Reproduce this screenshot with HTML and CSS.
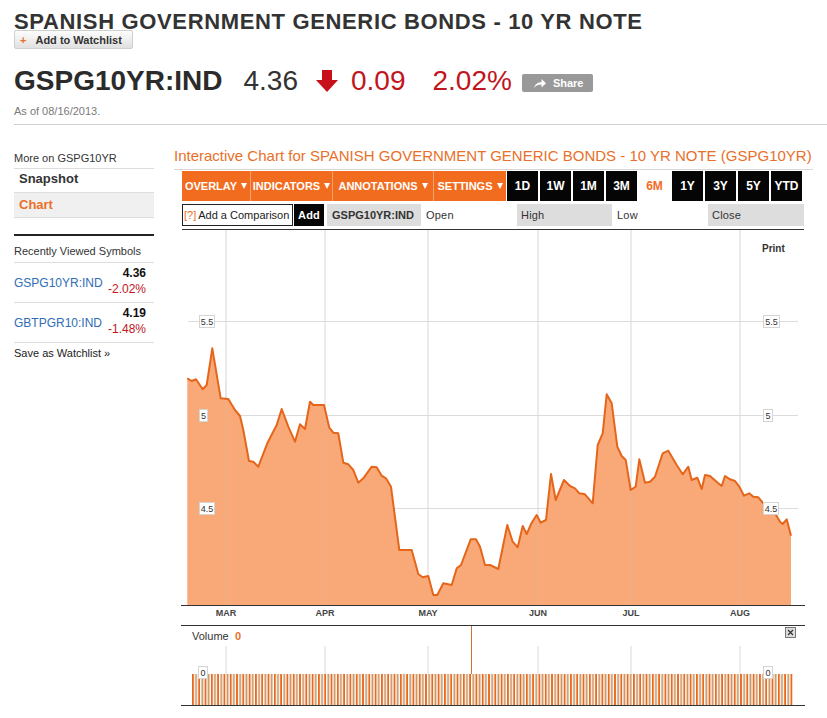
FILE: index.html
```html
<!DOCTYPE html>
<html>
<head>
<meta charset="utf-8">
<link rel="stylesheet" href="styles.css">
</head>
<body>
<div class="page">
  <header class="head">
    <h1 class="title">SPANISH GOVERNMENT GENERIC BONDS - 10 YR NOTE</h1>
    <div class="watch"><span class="plus">+</span><span>Add to Watchlist</span></div>
    <div class="quote">
      <span class="sym">GSPG10YR:IND</span>
      <span class="price">4.36</span>
      <svg class="arrow" width="22" height="22" viewBox="0 0 22 22"><path d="M6 0H16V10H22L11 22L0 10H6Z" fill="#c8101a"/></svg>
      <span class="chg">0.09</span>
      <span class="pct">2.02%</span>
      <div class="share"><svg width="12" height="9" viewBox="0 0 12 9"><path d="M0 9C1 5 4 3.2 7.5 3.2V0L12 4.3L7.5 8.6V5.6C4.5 5.6 2 6.5 0 9Z" fill="#fff"/></svg><span>Share</span></div>
    </div>
    <div class="asof">As of 08/16/2013.</div>
  </header>

  <div class="content">
    <aside class="side">
      <div class="side-h">More on GSPG10YR</div>
      <div class="side-link">Snapshot</div>
      <div class="side-link active">Chart</div>
      <div class="side-sep"></div>
      <div class="side-h2">Recently Viewed Symbols</div>
      <div class="rv">
        <span class="rv-sym">GSPG10YR:IND</span>
        <div class="rv-vals"><div class="rv-v">4.36</div><div class="rv-p">-2.02%</div></div>
      </div>
      <div class="rv">
        <span class="rv-sym">GBTPGR10:IND</span>
        <div class="rv-vals"><div class="rv-v">4.19</div><div class="rv-p">-1.48%</div></div>
      </div>
      <div class="save">Save as Watchlist »</div>
    </aside>

    <main class="main">
      <div class="ctitle">Interactive Chart for SPANISH GOVERNMENT GENERIC BONDS - 10 YR NOTE (GSPG10YR)</div>
      <div class="toolbar">
        <div class="menus">
          <div class="menu m1">OVERLAY<span class="tri"></span></div>
          <div class="menu m2">INDICATORS<span class="tri"></span></div>
          <div class="menu m3">ANNOTATIONS<span class="tri"></span></div>
          <div class="menu m4">SETTINGS<span class="tri"></span></div>
        </div>
        <div class="rng first">1D</div>
        <div class="rng">1W</div>
        <div class="rng">1M</div>
        <div class="rng">3M</div>
        <div class="rng sel">6M</div>
        <div class="rng">1Y</div>
        <div class="rng">3Y</div>
        <div class="rng">5Y</div>
        <div class="rng">YTD</div>
      </div>
      <div class="cmp-row">
        <div class="cmp"><span class="q">[?]</span>Add a Comparison</div>
        <div class="add">Add</div>
        <div class="symbox">GSPG10YR:IND</div>
        <div class="lbl w96">Open</div>
        <div class="box w95">High</div>
        <div class="lbl w96">Low</div>
        <div class="box w96">Close</div>
      </div>
      <svg class="chart" width="627" height="488" viewBox="181 230 627 488">
        <defs>
          <pattern id="vb" patternUnits="userSpaceOnUse" x="192" y="674" width="6.3" height="31">
            <rect x="0" y="0" width="1.8" height="31" fill="#e9691f"/>
            <rect x="3.15" y="0" width="1.8" height="31" fill="#c99563"/>
          </pattern>
        </defs>
        <g stroke="#e4e4e4" stroke-width="1.5">
          <line x1="226" y1="230" x2="226" y2="605"/>
          <line x1="325" y1="230" x2="325" y2="605"/>
          <line x1="428" y1="230" x2="428" y2="605"/>
          <line x1="538" y1="230" x2="538" y2="605"/>
          <line x1="631" y1="230" x2="631" y2="605"/>
          <line x1="740" y1="230" x2="740" y2="605"/>
        </g>
        <g stroke="#dcdcdc" stroke-width="1">
          <line x1="188" y1="321.5" x2="798" y2="321.5"/>
          <line x1="188" y1="415.5" x2="798" y2="415.5"/>
          <line x1="188" y1="508.5" x2="798" y2="508.5"/>
        </g>
        <path fill="#f9a978" d="M187.3,605 L187.3,378.3 L191.7,381 L196,379.3 L202.7,389.3 L206.7,385 L212.3,348.3 L220.7,398.3 L228.3,399 L235,410 L240,416 L243.3,430 L249,461 L253.3,461.7 L258.3,466.7 L267.3,443.3 L276.7,425 L281.7,409 L288.3,426.7 L295,441.7 L300,424.3 L305,429 L310,401.7 L313.3,405 L324,405 L329.3,427.7 L333.3,432.7 L338.3,433.3 L343.3,462.7 L348.3,464.3 L353.3,470 L358.3,482.7 L363.3,478.3 L371.7,466.7 L376.7,467.3 L381.7,475.7 L386,478.3 L391,486.7 L399.3,550 L411.7,550 L418.3,574 L422.7,577.3 L428.3,576 L433.3,595 L437.3,595 L443.3,583.3 L451.7,585 L456.7,568.3 L461,565 L470.7,539.3 L476,539.3 L480,546.7 L485,565 L490,565 L498.3,569 L507.3,525 L512.7,541.7 L517.7,547.3 L522.7,526 L526.7,534 L531.7,522.7 L536.7,515 L540.7,522.7 L546,520 L551,474 L555.7,500 L564,480 L570,486 L575,488.3 L579.3,493.3 L585,494.3 L592.7,503.3 L597.7,445 L602.7,433.3 L606.7,394.3 L611.7,403.3 L617.3,446.7 L621.7,456 L625.7,460 L630.7,490 L635.7,486.7 L639.3,459.3 L645,482.7 L650,481.7 L655,476.7 L662.7,453.3 L668.3,450.7 L676.7,465 L682.7,474.3 L688.3,466.7 L691.7,480 L697.3,477.7 L701.7,489 L705,475 L710,476 L718.3,483.3 L721.7,486 L725,476 L730,479.3 L735,481 L739.3,486.7 L744,495.7 L749.3,493.3 L753.3,496.7 L758.3,497.3 L763.3,503.3 L769.3,505 L775,513.3 L780,521.7 L782.7,524 L786.7,519.3 L791,535.7 L791,605 Z"/>
        <g stroke="rgba(200,200,200,0.25)" stroke-width="1">
          <line x1="226" y1="380" x2="226" y2="605"/>
          <line x1="325" y1="405" x2="325" y2="605"/>
          <line x1="538" y1="515" x2="538" y2="605"/>
          <line x1="631" y1="490" x2="631" y2="605"/>
          <line x1="740" y1="487" x2="740" y2="605"/>
        </g>
        <polyline fill="none" stroke="#e5661b" stroke-width="2" stroke-linejoin="round" points="187.3,378.3 191.7,381 196,379.3 202.7,389.3 206.7,385 212.3,348.3 220.7,398.3 228.3,399 235,410 240,416 243.3,430 249,461 253.3,461.7 258.3,466.7 267.3,443.3 276.7,425 281.7,409 288.3,426.7 295,441.7 300,424.3 305,429 310,401.7 313.3,405 324,405 329.3,427.7 333.3,432.7 338.3,433.3 343.3,462.7 348.3,464.3 353.3,470 358.3,482.7 363.3,478.3 371.7,466.7 376.7,467.3 381.7,475.7 386,478.3 391,486.7 399.3,550 411.7,550 418.3,574 422.7,577.3 428.3,576 433.3,595 437.3,595 443.3,583.3 451.7,585 456.7,568.3 461,565 470.7,539.3 476,539.3 480,546.7 485,565 490,565 498.3,569 507.3,525 512.7,541.7 517.7,547.3 522.7,526 526.7,534 531.7,522.7 536.7,515 540.7,522.7 546,520 551,474 555.7,500 564,480 570,486 575,488.3 579.3,493.3 585,494.3 592.7,503.3 597.7,445 602.7,433.3 606.7,394.3 611.7,403.3 617.3,446.7 621.7,456 625.7,460 630.7,490 635.7,486.7 639.3,459.3 645,482.7 650,481.7 655,476.7 662.7,453.3 668.3,450.7 676.7,465 682.7,474.3 688.3,466.7 691.7,480 697.3,477.7 701.7,489 705,475 710,476 718.3,483.3 721.7,486 725,476 730,479.3 735,481 739.3,486.7 744,495.7 749.3,493.3 753.3,496.7 758.3,497.3 763.3,503.3 769.3,505 775,513.3 780,521.7 782.7,524 786.7,519.3 791,535.7"/>
        <g class="ylab">
          <rect x="199.5" y="315.5" width="15" height="12"/><text x="207" y="325">5.5</text>
          <rect x="199.5" y="409.5" width="8" height="12"/><text x="203.5" y="419">5</text>
          <rect x="199.5" y="502.5" width="15" height="12"/><text x="207" y="512">4.5</text>
          <rect x="763.5" y="315.5" width="16" height="12"/><text x="771.5" y="325">5.5</text>
          <rect x="763.5" y="409.5" width="9" height="12"/><text x="768" y="419">5</text>
          <rect x="763.5" y="502.5" width="15" height="12"/><text x="771" y="512">4.5</text>
        </g>
        <text class="print" x="762" y="252">Print</text>
        <g stroke="#333" stroke-width="1">
          <line x1="181" y1="605.5" x2="805" y2="605.5"/>
          <line x1="181" y1="625.5" x2="805" y2="625.5"/>
          <line x1="181" y1="705.5" x2="805" y2="705.5"/>
        </g>
        <g class="mon">
          <text x="226" y="616">MAR</text>
          <text x="325" y="616">APR</text>
          <text x="428" y="616">MAY</text>
          <text x="538" y="616">JUN</text>
          <text x="631" y="616">JUL</text>
          <text x="740" y="616">AUG</text>
        </g>
        <text class="vol" x="192" y="640">Volume</text>
        <text class="vol0" x="235" y="640">0</text>
        <g>
          <rect x="785.5" y="627.5" width="10" height="10" fill="#ddd" stroke="#777"/>
          <path d="M788 630L793 635M793 630L788 635" stroke="#333" stroke-width="1.2"/>
        </g>
        <g stroke="#e6e6e6" stroke-width="1.5">
          <line x1="226" y1="646" x2="226" y2="674"/>
          <line x1="325" y1="646" x2="325" y2="674"/>
          <line x1="428" y1="646" x2="428" y2="674"/>
          <line x1="538" y1="646" x2="538" y2="674"/>
          <line x1="631" y1="646" x2="631" y2="674"/>
          <line x1="740" y1="646" x2="740" y2="674"/>
        </g>
        <line x1="471.5" y1="626" x2="471.5" y2="674" stroke="#c8733a" stroke-width="1"/>
        <rect x="192" y="674" width="601" height="31" fill="url(#vb)"/>
        <g class="ylab">
          <rect x="198.5" y="666.5" width="9" height="12"/><text x="203" y="676">0</text>
          <rect x="763.5" y="666.5" width="9" height="12"/><text x="768" y="676">0</text>
        </g>
      </svg>
    </main>
  </div>
</div>
</body>
</html>
```
FILE: styles.css
```css
html, body {
  margin: 0;
  padding: 0;
  background: #fff;
}
body {
  font-family: "Liberation Sans", Arial, sans-serif;
  color: #333;
  width: 827px;
  height: 718px;
  overflow: hidden;
}
.page {
  padding-left: 14px;
}
.head {
  border-bottom: 1px solid #cfcfcf;
  padding-bottom: 6px;
}
.title {
  margin: 0;
  padding-top: 13px;
  font-size: 22px;
  line-height: 17px;
  font-weight: bold;
  letter-spacing: 0.65px;
  color: #333;
}
.watch {
  margin-top: 0;
  width: 119px;
  height: 19px;
  box-sizing: border-box;
  display: flex;
  align-items: center;
  padding-left: 5px;
  border: 1px solid #cfcfcf;
  border-radius: 2px;
  background: linear-gradient(#fdfdfd, #e0e0e0);
  font-size: 11px;
  font-weight: bold;
  color: #333;
}
.plus {
  color: #e8702a;
  margin-right: 9px;
}
.quote {
  margin-top: 15px;
  display: flex;
  align-items: center;
  font-size: 28px;
  line-height: 34px;
}
.sym {
  font-weight: bold;
  color: #2b2b2b;
}
.price {
  margin-left: 21px;
  color: #333;
}
.arrow {
  margin-left: 18px;
}
.chg {
  margin-left: 13px;
  color: #c0161e;
}
.pct {
  margin-left: 27px;
  color: #c0161e;
}
.share {
  margin-left: 10px;
  margin-top: 4px;
  width: 71px;
  height: 18px;
  box-sizing: border-box;
  padding-left: 12px;
  display: flex;
  align-items: center;
  gap: 7px;
  background: #999;
  border-radius: 2px;
  color: #fff;
  font-size: 11px;
  font-weight: bold;
  line-height: 18px;
}
.asof {
  margin-top: 6px;
  font-size: 11px;
  line-height: 14px;
  color: #7a7a7a;
}

.content {
  display: flex;
  align-items: flex-start;
}
.side {
  width: 140px;
  margin-right: 16px;
  padding-top: 26px;
  font-size: 11px;
}
.side-h {
  line-height: 14px;
  padding-bottom: 3px;
  border-bottom: 1px solid #ddd;
}
.side-link {
  font-size: 13px;
  font-weight: bold;
  line-height: 18px;
  padding: 1px 5px 4px;
  border-bottom: 1px solid #ddd;
  color: #333;
}
.side-link.active {
  padding: 3px 5px;
  background: #f0f0f0;
  color: #e8702a;
}
.side-sep {
  margin-top: 16px;
  height: 2px;
  background: #222;
}
.side-h2 {
  line-height: 14px;
  padding: 8px 0 4px;
  border-bottom: 1px solid #ddd;
}
.rv {
  display: flex;
  justify-content: space-between;
  align-items: center;
  padding: 2px 8px 5px 0;
  border-bottom: 1px solid #ddd;
}
.rv-sym {
  font-size: 12px;
  line-height: 16px;
  padding-top: 3px;
  color: #2f6db5;
}
.rv-vals {
  text-align: right;
  font-size: 12px;
  line-height: 16px;
}
.rv-v {
  font-weight: bold;
  color: #111;
}
.rv-p {
  color: #c0161e;
}
.save {
  padding-top: 3px;
  line-height: 14px;
  color: #222;
}

.main {
  flex: 1;
  padding-top: 21px;
}
.ctitle {
  margin: 0 14px 0 4px;
  padding-bottom: 3px;
  border-bottom: 1px solid #d6d6d6;
  font-size: 15px;
  line-height: 20px;
  color: #e8702a;
}
.toolbar {
  margin: 1px 0 0 12px;
  width: 622px;
  height: 30px;
  display: flex;
}
.menus {
  display: flex;
  background: #f26c1f;
}
.menu {
  display: flex;
  align-items: center;
  justify-content: center;
  box-sizing: border-box;
  color: #fff;
  font-size: 11px;
  font-weight: bold;
  border-right: 1px solid #f7a26a;
}
.menu.m4 {
  border-right: none;
}
.m1 { width: 69px; }
.m2 { width: 82px; }
.m3 { width: 101px; }
.m4 { width: 72px; }
.tri {
  margin-left: 4px;
  width: 0;
  height: 0;
  border-left: 3.5px solid transparent;
  border-right: 3.5px solid transparent;
  border-top: 6px solid #fff;
}
.rng {
  width: 31px;
  margin-left: 2px;
  background: #050505;
  color: #fff;
  font-size: 12px;
  font-weight: bold;
  display: flex;
  align-items: center;
  justify-content: center;
}
.rng.first {
  margin-left: 1px;
}
.rng.sel {
  background: none;
  color: #f26c1f;
}
.cmp-row {
  margin: 3px 0 0 12px;
  width: 622px;
  height: 22px;
  padding-bottom: 3px;
  border-bottom: 1px solid #333;
  display: flex;
  font-size: 11px;
  letter-spacing: 0.2px;
}
.cmp-row > div {
  display: flex;
  align-items: center;
  box-sizing: border-box;
}
.cmp {
  width: 111px;
  border: 1px solid #222;
  padding-left: 1px;
  color: #222;
  letter-spacing: 0;
}
.q {
  color: #e8702a;
  margin-right: 2px;
}
.add {
  width: 30px;
  margin-left: 1px;
  justify-content: center;
  background: #050505;
  color: #fff;
  font-weight: bold;
}
.symbox {
  width: 94px;
  margin-left: 3px;
  padding-left: 5px;
  background: #ddd;
  font-weight: bold;
  letter-spacing: 0;
}
.lbl {
  padding-left: 5px;
}
.box {
  padding-left: 4px;
  background: #ddd;
}
.w95 { width: 95px; }
.w96 { width: 96px; }

.chart {
  display: block;
  margin-left: 11px;
  font-family: "Liberation Sans", Arial, sans-serif;
}
.ylab rect {
  fill: #fff;
  stroke: #d4d4d4;
  stroke-width: 1;
}
.ylab text {
  font-size: 9px;
  fill: #333;
  text-anchor: middle;
}
.print {
  font-size: 10px;
  font-weight: bold;
  fill: #333;
}
.mon text {
  font-size: 9px;
  font-weight: bold;
  fill: #444;
  text-anchor: middle;
}
.vol {
  font-size: 11px;
  fill: #333;
}
.vol0 {
  font-size: 11px;
  font-weight: bold;
  fill: #e8702a;
}
```
